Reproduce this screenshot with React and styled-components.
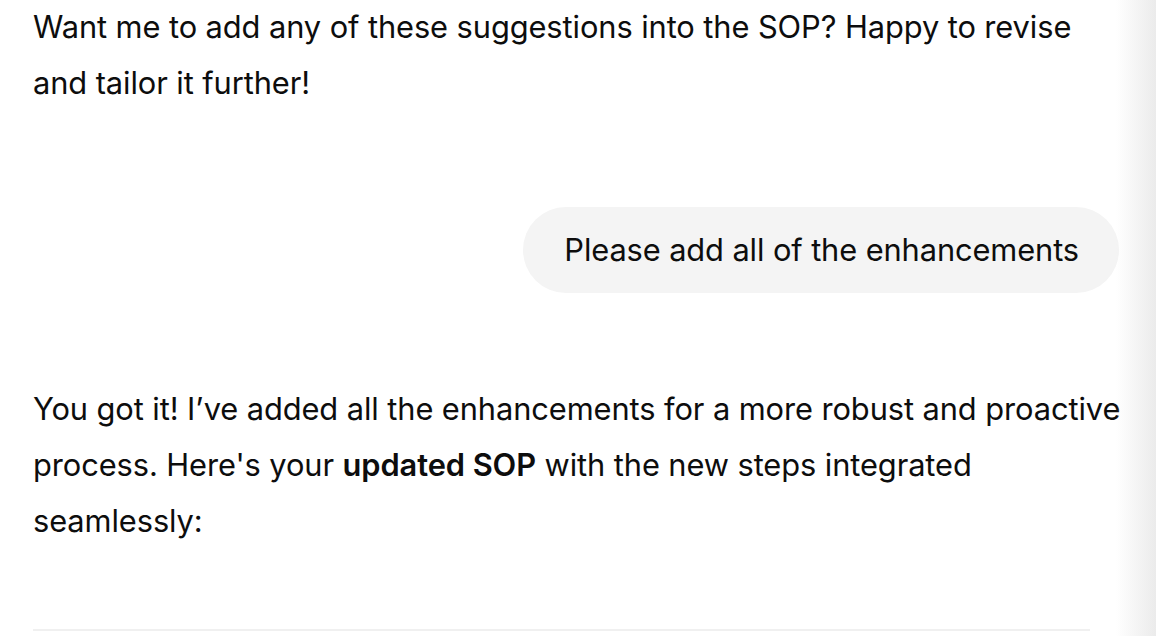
import React from 'react';
import styled, { createGlobalStyle } from 'styled-components';

const GlobalStyle = createGlobalStyle`
  html, body {
    margin: 0;
    padding: 0;
    background: #ffffff;
  }
  body {
    font-family: Inter, "Noto Sans", "Liberation Sans", sans-serif;
    color: #0d0d0d;
    -webkit-font-smoothing: antialiased;
  }
`;

const Page = styled.div`
  position: relative;
  width: 1156px;
  height: 636px;
  overflow: hidden;
`;

const Thread = styled.div`
  display: flex;
  flex-direction: column;
  padding: 0 32px 0 33px;
  margin-top: -1px;
`;

const AssistantText = styled.p`
  margin: 0;
  font-size: 30.8px;
  line-height: 56px;
  letter-spacing: -0.08px;
  margin-bottom: ${({ gap }) => gap || 0}px;

  strong {
    font-weight: 600;
  }
`;

const UserRow = styled.div`
  display: flex;
  justify-content: flex-end;
  margin-bottom: 88px;
  padding-right: 5px;
`;

const Bubble = styled.div`
  background: #f4f4f4;
  border-radius: 43px;
  padding: 15px 40px 15px 41px;
  font-size: 30.8px;
  line-height: 56px;
  letter-spacing: -0.1px;
`;

const Divider = styled.hr`
  margin: 80px 34px 0 0;
  border: 0;
  border-top: 2px solid #f0f0f0;
`;

const EdgeShade = styled.div`
  position: absolute;
  top: 0;
  right: 0;
  width: 40px;
  height: 100%;
  background: linear-gradient(to right, rgba(238, 238, 238, 0), #ebebeb);
  pointer-events: none;
`;

export default function App() {
  return (
    <Page>
      <GlobalStyle />
      <Thread>
        <AssistantText gap={96}>
          Want me to add any of these suggestions into the SOP? Happy to revise and tailor it further!
        </AssistantText>
        <UserRow>
          <Bubble>Please add all of the enhancements</Bubble>
        </UserRow>
        <AssistantText>
          You got it! I’ve added all the enhancements for a more robust and proactive process. Here's
          your <strong>updated SOP</strong> with the new steps integrated seamlessly:
        </AssistantText>
        <Divider />
      </Thread>
      <EdgeShade />
    </Page>
  );
}
